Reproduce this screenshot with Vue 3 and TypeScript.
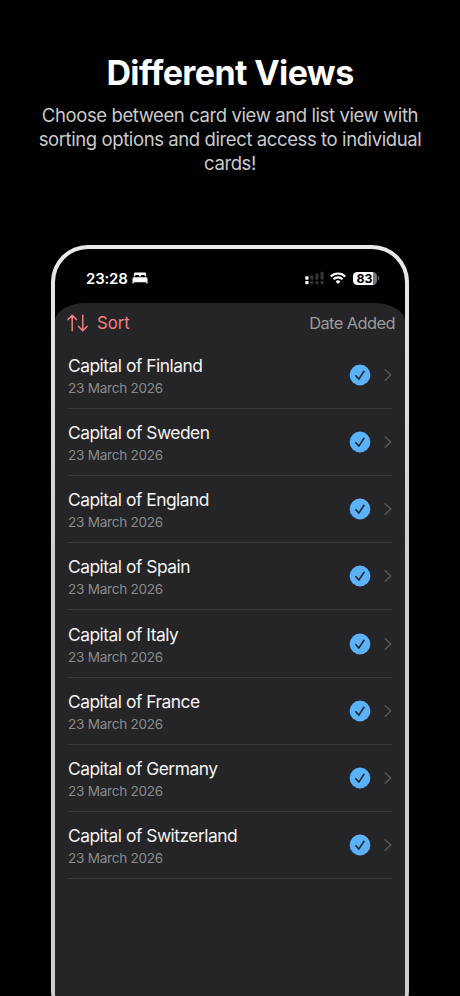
<script setup lang="ts">
interface Card {
  title: string
  date: string
}

const cards: Card[] = ['Finland', 'Sweden', 'England', 'Spain', 'Italy', 'France', 'Germany', 'Switzerland'].map(
  (country) => ({ title: `Capital of ${country}`, date: '23 March 2026' }),
)
</script>

<template>
  <main class="page">
    <header class="intro">
      <h1>Different Views</h1>
      <p>Choose between card view and list view with sorting options and direct access to individual cards!</p>
    </header>

    <section class="phone">
      <div class="screen">
        <div class="status">
          <span class="time">23:28</span>
          <svg class="bed" width="16" height="12" viewBox="0 0 17 12" preserveAspectRatio="none" fill="#fff">
            <path d="M2 4.6V2.3C2 1.2 2.7.6 3.7.6h9.6c1 0 1.7.6 1.7 1.7v2.3h-1.2c0-1-.4-1.5-1.2-1.5h-2.1c-.8 0-1.2.5-1.2 1.5H7.7c0-1-.4-1.5-1.2-1.5H4.4c-.8 0-1.2.5-1.2 1.5z" />
            <path d="M2.2 5.3h12.6c1.1 0 1.7.7 1.7 1.7v4.5h-1.4V10.2H1.9v1.3H.5V7c0-1 .6-1.7 1.7-1.7z" />
          </svg>
          <span class="spacer"></span>
          <svg class="signal" width="20" height="14" viewBox="0 0 20 14">
            <g fill="#fff"><rect x="0.3" y="5.2" width="3.2" height="3.6" rx="0.8" /><rect x="0.3" y="10" width="3.2" height="3.2" rx="0.8" /></g>
            <g fill="#343436"><rect x="5.4" y="4.2" width="3" height="4.6" rx="0.8" /><rect x="5.4" y="10" width="3" height="3.2" rx="0.8" /><rect x="10.5" y="2.5" width="3" height="6.3" rx="0.8" /><rect x="10.5" y="10" width="3" height="3.2" rx="0.8" /><rect x="15.6" y="0.8" width="3" height="8" rx="0.8" /><rect x="15.6" y="10" width="3" height="3.2" rx="0.8" /></g>
          </svg>
          <svg class="wifi" width="16" height="12" viewBox="0 0 16 12" fill="none" stroke="#fff" stroke-width="2.1">
            <path d="M.8 4.4a10.4 10.4 0 0 1 14.4 0M3.4 7.2a6.6 6.6 0 0 1 9.2 0" />
            <path d="M8 11.9 5.6 9.5a3.5 3.5 0 0 1 4.8 0z" fill="#fff" stroke="none" />
          </svg>
          <span class="battery"><b>83</b></span><i class="cap"></i>
        </div>

        <div class="panel">
          <div class="toolbar">
            <svg class="arrows" width="22" height="18" viewBox="0 0 22 18" fill="none" stroke="#f27f85" stroke-width="1.5" stroke-linecap="round" stroke-linejoin="round">
              <path d="M5.2 16.8V1.2M1 5.6l4.2-4.4 4.2 4.4M15.8 1.2v15.6M11.6 12.4l4.2 4.4 4.2-4.4" />
            </svg>
            <span class="sort">Sort</span>
            <span class="order">Date Added</span>
          </div>
          <ul class="list">
            <li v-for="card in cards" :key="card.title" class="row">
              <div class="copy">
                <div class="title">{{ card.title }}</div>
                <div class="date">{{ card.date }}</div>
              </div>
              <svg class="check" width="22" height="22" viewBox="0 0 22 22">
                <circle cx="11" cy="11" r="10.4" fill="#5bb2fa" />
                <path d="m6.9 11.7 2.9 3.4 5.2-7.8" fill="none" stroke="#20262e" stroke-width="1.6" stroke-linecap="round" stroke-linejoin="round" />
              </svg>
              <svg class="chevron" width="8" height="12" viewBox="0 0 8 12" fill="none" stroke="#5b5b5e" stroke-width="1.3" stroke-linecap="round" stroke-linejoin="round">
                <path d="M1.2.7 6.8 6l-5.6 5.3" />
              </svg>
            </li>
          </ul>
        </div>
      </div>
    </section>
  </main>
</template>

<style>
body {
  background: #000;
}
</style>

<style scoped>
.page {
  box-sizing: border-box;
  height: 996px;
  overflow: hidden;
  background: #000;
  color: #fff;
  font-family: Inter, "Liberation Sans", sans-serif;
}
.intro {
  box-sizing: border-box;
  height: 245px;
  padding: 52px 30px 0;
  text-align: center;
}
h1 {
  margin: 0;
  font-size: 34px;
  line-height: 42px;
  font-weight: 700;
  letter-spacing: -0.6px;
}
p {
  margin: 9px 0 0;
  font-size: 18.5px;
  line-height: 24px;
  color: #cbcbcb;
  letter-spacing: -0.4px;
}
.phone {
  box-sizing: border-box;
  width: 358px;
  height: 782px;
  margin-left: 51px;
  padding: 4px;
  border-radius: 37px;
  background: linear-gradient(#ebe9e8, #cfcdd0 40%, #cfcdd0);
}
.screen {
  height: 100%;
  overflow: hidden;
  border-radius: 33px;
  background: #000;
}
.status {
  box-sizing: border-box;
  display: flex;
  align-items: center;
  height: 54px;
  padding: 4px 26px 0 31px;
}
.time {
  font-size: 15px;
  font-weight: 600;
  letter-spacing: -0.2px;
}
.bed {
  margin-left: 4px;
}
.spacer {
  flex: 1;
}
.wifi {
  margin: 0 7px 0 5px;
}
.battery {
  display: flex;
  align-items: center;
  justify-content: center;
  width: 24px;
  height: 13px;
  border-radius: 4.2px;
  background: linear-gradient(90deg, #fff 83%, #77777a 83%);
  color: #000;
  font-size: 12.3px;
}
.battery b {
  font-weight: 700;
}
.cap {
  width: 1.5px;
  height: 4px;
  margin-left: 1px;
  border-radius: 0 2px 2px 0;
  background: #77777a;
}
.panel {
  height: 720px;
  border-radius: 32px 32px 0 0 / 18px 18px 0 0;
  background: #252527;
}
.toolbar {
  display: flex;
  align-items: center;
  height: 39.1px;
  padding: 0 10px 0 12px;
  font-size: 16.7px;
}
.sort {
  margin-left: 8px;
  color: #f27f85;
}
.order {
  margin-left: auto;
  font-size: 16.4px;
  letter-spacing: -0.55px;
  color: #9b9b9e;
}
.list {
  margin: 0 13px;
  padding: 0;
  list-style: none;
}
.row {
  box-sizing: border-box;
  display: flex;
  align-items: center;
  height: 67.1px;
  border-bottom: 1px solid #3a3a3c;
}
.copy {
  flex: 1;
  padding-top: 3px;
}
.title {
  font-size: 17.4px;
  line-height: 24px;
  color: #f3f3f3;
  letter-spacing: -0.5px;
}
.date {
  font-size: 13.6px;
  line-height: 21px;
  color: #8a8a8d;
  letter-spacing: -0.27px;
}
.chevron {
  margin-left: 13px;
}
</style>
